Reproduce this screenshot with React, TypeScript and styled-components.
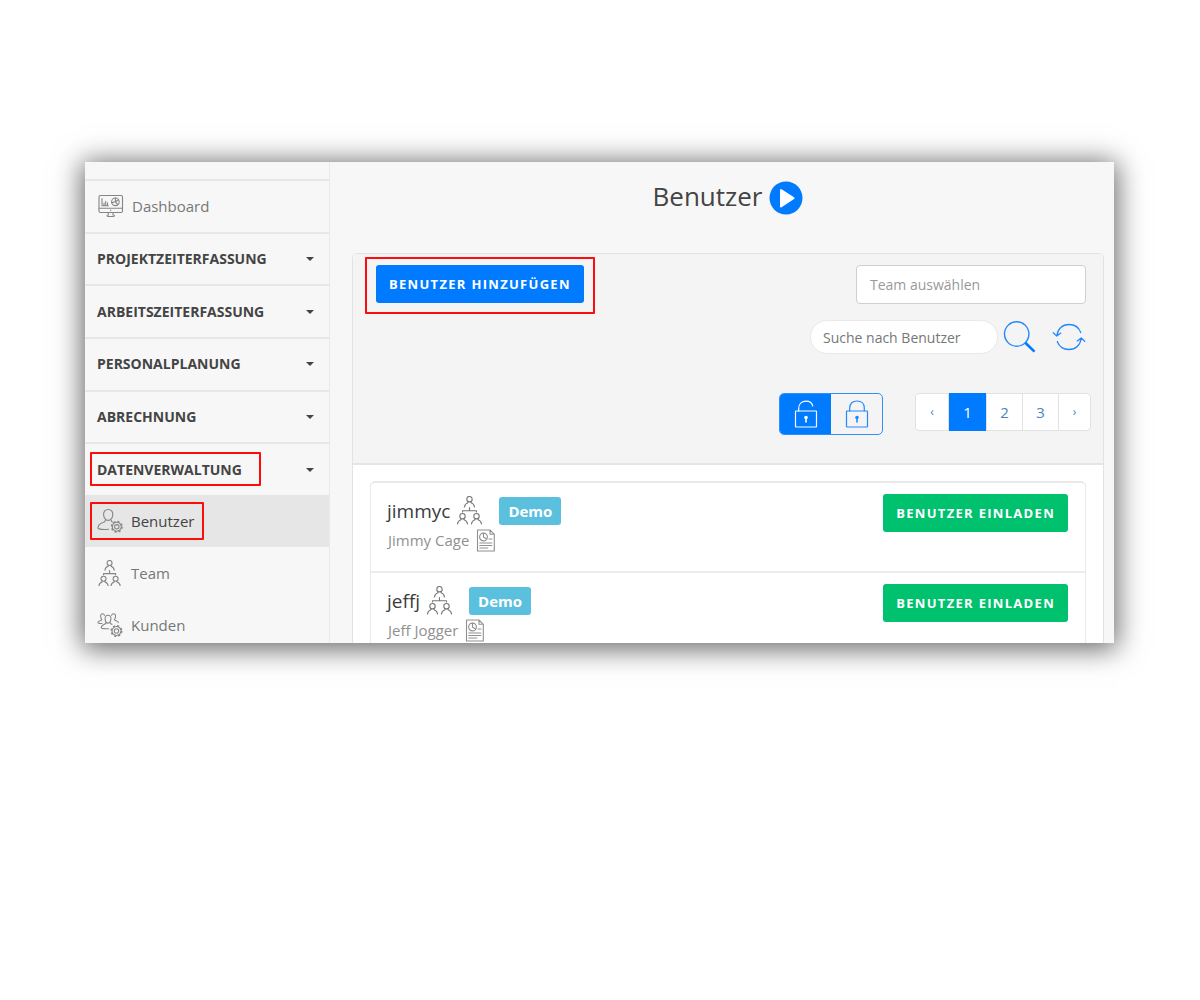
import React, { useState } from "react";
import styled, { createGlobalStyle, css } from "styled-components";

const GlobalStyle = createGlobalStyle`
  *, *::before, *::after { box-sizing: border-box; }
  body {
    margin: 0;
    background: #fff;
    color: #444;
    font-family: "Open Sans", "Noto Sans", sans-serif;
    font-size: 15px;
    line-height: 20px;
  }
  button, input { font: inherit; }
  button { cursor: pointer; }
`;

const Page = styled.div`
  display: flex;
  height: 100vh;
  padding: 162px 86px 357px 85px;
`;

const Window = styled.div`
  display: grid;
  grid-template-columns: 245px minmax(0, 1fr);
  flex: 1;
  overflow: hidden;
  background: #f7f7f7;
  box-shadow: 0 3px 26px 3px rgba(0, 0, 0, 0.6);
`;

/* Sidebar */

const Sidebar = styled.nav`
  padding-top: 17px;
  border-right: 1px solid #e9e9e9;
`;

const Sections = styled.div`
  display: grid;
  grid-template-rows: repeat(6, 1fr);
  height: 316px;
`;

const sidebarCell = css`
  display: flex;
  align-items: center;
  border: 0;
  border-top: 2px solid #e7e7e7;
  background: none;
`;

const DashboardLink = styled.a`
  ${sidebarCell}
  gap: 7px;
  padding: 0 12px;
  color: #777;
  text-decoration: none;
`;

const SectionButton = styled.button`
  ${sidebarCell}
  justify-content: space-between;
  padding: 0 15px 0 12px;
  color: #444;
  font-size: 14px;
  font-weight: 700;
  text-transform: uppercase;
`;

const Caret = styled.span`
  border: 4px solid transparent;
  border-top-color: #444;
  border-bottom: 0;
`;

const MenuLink = styled.a<{ $active?: boolean }>`
  display: flex;
  align-items: center;
  gap: 7px;
  height: 52px;
  padding: 0 12px;
  background: ${(p) => (p.$active ? "#e6e6e6" : "transparent")};
  color: ${(p) => (p.$active ? "#444" : "#777")};
  text-decoration: none;
`;

/* Red marker frame drawn over the part it wraps */
const Marked = styled.span<{ $inset: string }>`
  position: relative;
  display: inline-flex;
  align-items: center;
  gap: inherit;

  &::after {
    content: "";
    position: absolute;
    inset: ${(p) => p.$inset};
    border: 2px solid #fb0d0d;
    border-radius: 1px;
    pointer-events: none;
  }
`;

/* Main area */

const Main = styled.main`
  padding: 16px 10px 0 22px;
`;

const TitleBar = styled.header`
  display: flex;
  align-items: center;
  justify-content: center;
  gap: 7px;
  height: 40px;
  margin-bottom: 35px;
`;

const Title = styled.h1`
  margin: 0 0 4px;
  font-size: 26px;
  font-weight: 400;
  line-height: 36px;
`;

const IconButton = styled.button`
  display: inline-flex;
  padding: 0;
  border: 0;
  background: none;
  color: #2288ff;
`;

const Card = styled.section`
  border: 1px solid #e2e2e2;
  border-radius: 5px;
  background: #fff;
`;

const CardHeader = styled.div`
  display: flex;
  align-items: flex-start;
  justify-content: space-between;
  padding: 11px 17px 28px 23px;
  border-bottom: 2px solid #e5e5e5;
  border-radius: 5px 5px 0 0;
  background: #f4f4f4;
`;

const ActionButton = styled.button<{ $tone: string }>`
  height: 38px;
  padding: 0 13px;
  border: 0;
  border-radius: 3px;
  background: ${(p) => p.$tone};
  color: #fff;
  font-size: 13px;
  font-weight: 700;
  letter-spacing: 0.1em;
  text-transform: uppercase;
  white-space: nowrap;
`;

const Filters = styled.div`
  display: flex;
  flex-direction: column;
  align-items: flex-end;
`;

const TeamInput = styled.input`
  width: 230px;
  height: 39px;
  padding: 0 13px;
  border: 1px solid #cfcfcf;
  border-radius: 4px;
  background: #fff;
  font-size: 14px;

  &::placeholder { color: #999; }
`;

const SearchRow = styled.form`
  display: flex;
  align-items: center;
  height: 34px;
  margin-top: 16px;
`;

const SearchInput = styled.input`
  width: 188px;
  height: 34px;
  margin-right: 5px;
  padding: 0 12px;
  border: 1px solid #e9e9e9;
  border-radius: 17px;
  background: #fff;
  font-size: 14px;

  &::placeholder { color: #777; }
`;

const RefreshButton = styled(IconButton)`
  margin-left: 16px;
`;

const PagingRow = styled.div`
  display: flex;
  align-items: flex-start;
  gap: 32px;
  margin: 39px -5px 0 0;
`;

const LockToggle = styled.div`
  display: flex;
  overflow: hidden;
  height: 42px;
  border: 1px solid #2f8fff;
  border-radius: 5px;
`;

const LockButton = styled.button<{ $active: boolean }>`
  display: flex;
  align-items: center;
  justify-content: center;
  width: 51px;
  padding: 0;
  border: 0;
  background: ${(p) => (p.$active ? "#007bff" : "transparent")};
  color: ${(p) => (p.$active ? "#fff" : "#2288ff")};
`;

const Pagination = styled.div`
  display: flex;
  height: 38px;
  border: 1px solid #e2e2e2;
  border-radius: 4px;
  background: #fff;
`;

const PageButton = styled.button<{ $current?: boolean; $arrow?: boolean }>`
  width: ${(p) => (p.$arrow ? 32 : p.$current ? 38 : 36)}px;
  margin: ${(p) => (p.$current ? "-1px 0" : "0")};
  padding: 0;
  border: 0;
  background: ${(p) => (p.$current ? "#007bff" : "transparent")};
  color: ${(p) => (p.$current ? "#fff" : "#4a86bd")};
  font-size: ${(p) => (p.$arrow ? 12 : 15)}px;

  & + & { border-left: 1px solid ${(p) => (p.$current ? "#007bff" : "#e2e2e2")}; }
`;

const UserList = styled.ul`
  margin: 16px 17px;
  padding: 0;
  border: 2px solid #e9e9e9;
  border-width: 2px 1px 1px;
  border-radius: 5px;
  list-style: none;
`;

const UserRow = styled.li`
  display: flex;
  align-items: flex-start;
  justify-content: space-between;
  height: 88px;
  padding: 11px 17px 0 16px;

  & + & { height: 90px; border-top: 2px solid #ececec; }
`;

const UserName = styled.div`
  display: flex;
  align-items: center;
  height: 33px;
  color: #3c3c3c;
  font-size: 19px;
  line-height: 28px;
`;

const Membership = styled.span`
  display: inline-flex;
  margin-left: 6px;
  color: #777;
`;

const Badge = styled.span`
  margin-left: 16px;
  padding: 0 9px;
  border-radius: 3px;
  background: #5bc0de;
  color: #fff;
  font-size: 15px;
  font-weight: 700;
`;

const FullName = styled.div`
  display: flex;
  align-items: center;
  gap: 7px;
  height: 26px;
  padding-left: 1px;
  color: #909090;
`;

/* Icons */

const Svg = styled.svg`
  flex: none;
  fill: none;
  stroke: currentColor;
  stroke-linecap: round;
  stroke-linejoin: round;
`;

const MenuSvg = styled(Svg)`
  color: #858585;
`;

const MonitorIcon = () => (
  <MenuSvg width="28" height="24" viewBox="0 0 28 24" strokeWidth="1.1" aria-hidden="true">
    <rect x="2" y="1.5" width="23.5" height="17" rx="1.4" />
    <path d="M2 14.2h23.5M11.3 18.5v2.6M16 18.5v2.6M10 21.2q0 1.3 1.2 1.3h5q1.2 0 1.2-1.3M13.7 16v.6" />
    <path d="M5 4.500v7.300h6.400M7 9v2M8.700 7.300V11M10.500 8.800V11" />
    <circle cx="18.400" cy="7.800" r="3.800" />
    <path d="M18.400 7.800V4M18.400 7.800l3-2M18.400 7.800l2.300 2.800M18.400 7.800l-3.700.8" />
  </MenuSvg>
);

const Gear = ({ x, y }: { x: number; y: number }) => (
  <g transform={`translate(${x} ${y})`}>
    <circle r="4.500" />
    <circle r="2.200" />
    <circle r="5.300" strokeWidth="1.400" strokeLinecap="butt" strokeDasharray="2.080 2.080" />
  </g>
);

const UserGearIcon = () => (
  <MenuSvg width="27" height="26" viewBox="0 0 27 26" strokeWidth="1.1" aria-hidden="true">
    <path d="M11.500 21.300c-3.500.3-7.500.1-9.500-.4-.8-.2-1.100-.7-1-1.500.4-3.500 3-4.400 5.800-5.200 1.200-.3 1.600-.9 1.500-2M11.200 1.500c-3 0-4.700 2.200-4.600 5.200.1 3 2 5.700 4.600 5.700s4.500-2.700 4.600-5.700c.1-3-1.600-5.200-4.600-5.200zM14.200 12.200c0 1.100.5 1.700 1.500 2" />
    <Gear x={19.800} y={18.800} />
  </MenuSvg>
);

const Person = ({ x, y }: { x: number; y: number }) => (
  <g transform={`translate(${x} ${y})`}>
    <circle cy="3.200" r="2.700" />
    <path d="M-1.500 5.500v1.200C-3.600 7.300-4.700 8.500-5 11M1.500 5.500v1.200C3.600 7.300 4.700 8.500 5 11" />
  </g>
);

const TeamIcon = () => (
  <Svg width="27" height="29" viewBox="0 0 27 29" strokeWidth="1.1" aria-hidden="true">
    <Person x={13.500} y={0} />
    <Person x={6.500} y={17} />
    <Person x={20.500} y={17} />
    <path d="M13.500 11.500v3.200M6.500 16v-1.300h14V16" />
  </Svg>
);

const MenuTeamIcon = () => (
  <MenuSvg width="27" height="26" viewBox="-1 0 29 28" strokeWidth="1.200" aria-hidden="true">
    <Person x={12.500} y={0} />
    <Person x={6} y={17} />
    <Person x={19} y={17} />
    <path d="M12.500 11.500v3.200M6 16v-1.300h13V16" />
  </MenuSvg>
);

const CustomersIcon = () => (
  <MenuSvg width="27" height="26" viewBox="0 0 27 26" strokeWidth="1.1" aria-hidden="true">
    <path d="M7.500 3.200C7 2.300 6.700 1.700 5.700 1.700 4.200 1.700 3.500 3 3.700 4.700c.1 1.200.5 2.200 1.100 2.900C4.500 8.900 1 8.700.9 10.500c0 .8 1.600 1 4.100 1M14.500 3.200c.5-.9 1-1.500 2-1.500 1.500 0 2.200 1.300 2 3-.1 1.200-.5 2.200-1.100 2.900.3 1.300 3.800 1.100 3.900 2.900" />
    <path d="M11 3.300c-2 0-3 1.400-2.900 3.300.1 2.500 1.300 4.500 2.900 4.500s2.800-2 2.900-4.500C14 4.700 13 3.300 11 3.300zM9 10.500c.3 2.500-4.700 1.700-4.800 5.100.1 1 3 1.200 7.500 1.100M13 10.500c.1 1.200.9 1.600 2 1.900" />
    <Gear x={19.500} y={19} />
  </MenuSvg>
);

const PlayIcon = () => (
  <svg width="34" height="34" viewBox="0 0 34 34" aria-hidden="true">
    <circle cx="17" cy="17" r="16.500" fill="#007bff" />
    <path d="M12 9v16.500L24.500 17.200z" fill="#fff" stroke="#fff" strokeWidth="2" strokeLinejoin="round" />
  </svg>
);

const SearchIcon = () => (
  <Svg width="33" height="34" viewBox="0 0 33 34" strokeWidth="1.400" aria-hidden="true">
    <circle cx="13.700" cy="14" r="12.200" />
    <path d="M22.300 22.800l9.200 8.800" strokeWidth="2.600" strokeLinecap="butt" stroke="#007bff" />
  </Svg>
);

const RefreshIcon = () => (
  <Svg width="34" height="30" viewBox="0 0 34 30" strokeWidth="1.300" aria-hidden="true">
    <path d="M5 13.500C5.500 7 10.500 2.500 17 2.500c5.500 0 10 3.200 11.700 8M1.300 10.800l3.500 3.300 4-3" />
    <path d="M29 16.500C28.500 23 23.500 27.500 17 27.500c-5.500 0-10-3.200-11.700-8M32.700 19.200l-3.500-3.300-4 3" />
  </Svg>
);

const LockIcon = ({ open }: { open?: boolean }) => (
  <Svg width="24" height="30" viewBox="0 0 24 30" strokeWidth="1.200" strokeLinecap="butt" aria-hidden="true">
    <rect x="1.500" y="12" width="21" height="16" rx=".5" />
    <path d={open ? "M4.700 12V9.500C4.700 5 7.800 2.200 12 2.200c3.500 0 6 1.800 6.800 4.800" : "M4.700 12V9C4.700 4.500 7.800 2 12 2s7.300 2.500 7.300 7v3"} />
    <circle cx="12" cy="18.500" r="1.200" fill="currentColor" />
    <path d="M12 18.500v4.500" strokeWidth="1.600" />
  </Svg>
);

const ReportIcon = () => (
  <Svg width="20" height="23" viewBox="0 0 20 23" strokeWidth="1.100" aria-hidden="true">
    <path d="M1.500 1h12.500l4.300 4.300V22H1.500zM14 1v4.300h4.300" />
    <circle cx="7.500" cy="8" r="3.900" />
    <path d="M7.500 4.200V8l3 2M13 10h3M3.800 14h12M3.800 16.500h12M3.800 19h8" />
  </Svg>
);

const SECTIONS = ["Projektzeiterfassung", "Arbeitszeiterfassung", "Personalplanung", "Abrechnung"];

const USERS = [
  { login: "jimmyc", name: "Jimmy Cage" },
  { login: "jeffj", name: "Jeff Jogger" },
];

export default function App() {
  const [page, setPage] = useState(1);
  const [locked, setLocked] = useState(false);

  return (
    <>
      <GlobalStyle />
      <Page>
        <Window>
          <Sidebar>
            <Sections>
              <DashboardLink href="#dashboard">
                <MonitorIcon />
                Dashboard
              </DashboardLink>
              {SECTIONS.map((section) => (
                <SectionButton key={section} type="button">
                  {section}
                  <Caret />
                </SectionButton>
              ))}
              <SectionButton type="button">
                <Marked $inset="-8px -19px -6px -7px">Datenverwaltung</Marked>
                <Caret />
              </SectionButton>
            </Sections>
            <MenuLink href="#benutzer" $active>
              <Marked $inset="-6px -10px -6px -7px">
                <UserGearIcon />
                Benutzer
              </Marked>
            </MenuLink>
            <MenuLink href="#team">
              <MenuTeamIcon />
              Team
            </MenuLink>
            <MenuLink href="#kunden">
              <CustomersIcon />
              Kunden
            </MenuLink>
          </Sidebar>

          <Main>
            <TitleBar>
              <Title>Benutzer</Title>
              <IconButton type="button" aria-label="Video abspielen">
                <PlayIcon />
              </IconButton>
            </TitleBar>

            <Card>
              <CardHeader>
                <Marked $inset="-8px -11px -11px -11px">
                  <ActionButton type="button" $tone="#007bff">Benutzer hinzufügen</ActionButton>
                </Marked>
                <Filters>
                  <TeamInput aria-label="Team auswählen" placeholder="Team auswählen" />
                  <SearchRow onSubmit={(e) => e.preventDefault()}>
                    <SearchInput aria-label="Suche nach Benutzer" placeholder="Suche nach Benutzer" />
                    <IconButton type="submit" aria-label="Suchen">
                      <SearchIcon />
                    </IconButton>
                    <RefreshButton type="button" aria-label="Aktualisieren">
                      <RefreshIcon />
                    </RefreshButton>
                  </SearchRow>
                  <PagingRow>
                    <LockToggle>
                      <LockButton type="button" aria-label="Entsperrt" $active={!locked} onClick={() => setLocked(false)}>
                        <LockIcon open />
                      </LockButton>
                      <LockButton type="button" aria-label="Gesperrt" $active={locked} onClick={() => setLocked(true)}>
                        <LockIcon />
                      </LockButton>
                    </LockToggle>
                    <Pagination>
                      <PageButton type="button" $arrow onClick={() => setPage(Math.max(1, page - 1))}>‹</PageButton>
                      {[1, 2, 3].map((n) => (
                        <PageButton key={n} type="button" $current={n === page} onClick={() => setPage(n)}>
                          {n}
                        </PageButton>
                      ))}
                      <PageButton type="button" $arrow onClick={() => setPage(Math.min(3, page + 1))}>›</PageButton>
                    </Pagination>
                  </PagingRow>
                </Filters>
              </CardHeader>

              <UserList>
                {USERS.map((user) => (
                  <UserRow key={user.login}>
                    <div>
                      <UserName>
                        {user.login}
                        <Membership>
                          <TeamIcon />
                        </Membership>
                        <Badge>Demo</Badge>
                      </UserName>
                      <FullName>
                        {user.name}
                        <ReportIcon />
                      </FullName>
                    </div>
                    <ActionButton type="button" $tone="#00c16e">Benutzer einladen</ActionButton>
                  </UserRow>
                ))}
              </UserList>
            </Card>
          </Main>
        </Window>
      </Page>
    </>
  );
}
